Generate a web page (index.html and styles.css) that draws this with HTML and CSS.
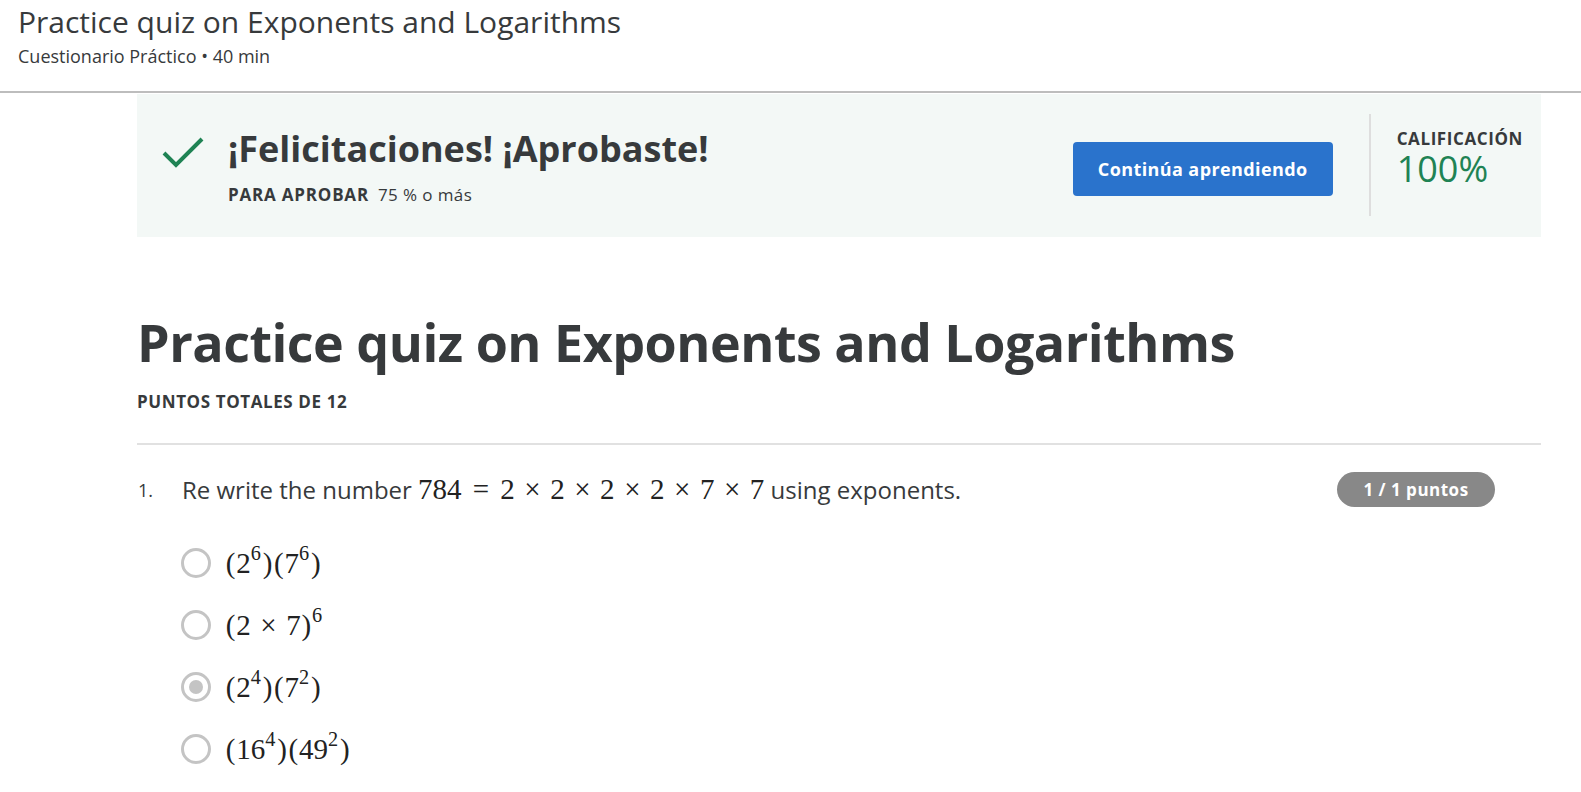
FILE: index.html
```html
<!DOCTYPE html>
<html lang="es">
<head>
<meta charset="utf-8">
<title>Practice quiz on Exponents and Logarithms</title>
<link rel="stylesheet" href="styles.css">
</head>
<body>
<header class="top">
  <h1 class="top-title">Practice quiz on Exponents and Logarithms</h1>
  <div class="top-sub">Cuestionario Práctico • 40 min</div>
</header>
<main class="content">
  <section class="banner">
    <div class="pass">
      <svg class="check" viewBox="0 0 42 32" width="42" height="32" aria-hidden="true">
        <polyline points="2,17 14,29 40,3" fill="none" stroke="#1f8354" stroke-width="4"/>
      </svg>
      <div class="pass-text">
        <div class="pass-title">¡Felicitaciones! ¡Aprobaste!</div>
        <div class="pass-req"><span class="pass-label">PARA APROBAR</span>75 % o más</div>
      </div>
    </div>
    <button class="btn" type="button">Continúa aprendiendo</button>
    <div class="divider"></div>
    <div class="grade">
      <div class="grade-label">CALIFICACIÓN</div>
      <div class="grade-value">100%</div>
    </div>
  </section>

  <h2 class="quiz-title">Practice quiz on Exponents and Logarithms</h2>
  <div class="points">PUNTOS TOTALES DE 12</div>
  <hr class="rule">

  <div class="question">
    <span class="qnum">1.</span>
    <p class="qtext">Re write the number <span class="math">784<span class="rel">=</span>2<span class="bin">×</span>2<span class="bin">×</span>2<span class="bin">×</span>2<span class="bin">×</span>7<span class="bin">×</span>7</span> using exponents.</p>
    <span class="badge">1 / 1 puntos</span>
  </div>

  <ul class="options">
    <li class="option"><span class="radio"></span><span class="math"><span class="par">(</span>2<sup>6</sup><span class="par">)</span><span class="par">(</span>7<sup>6</sup><span class="par">)</span></span></li>
    <li class="option"><span class="radio"></span><span class="math"><span class="par">(</span>2<span class="bin">×</span>7<span class="par">)</span><sup>6</sup></span></li>
    <li class="option"><span class="radio radio-on"></span><span class="math"><span class="par">(</span>2<sup>4</sup><span class="par">)</span><span class="par">(</span>7<sup>2</sup><span class="par">)</span></span></li>
    <li class="option"><span class="radio"></span><span class="math"><span class="par">(</span>16<sup>4</sup><span class="par">)</span><span class="par">(</span>49<sup>2</sup><span class="par">)</span></span></li>
  </ul>
</main>
</body>
</html>
```

FILE: styles.css
```css
html, body {
  margin: 0;
  padding: 0;
  background: #ffffff;
}

body {
  font-family: "Open Sans", "Liberation Sans", sans-serif;
  color: #373a3c;
}

.top {
  height: 93px;
  box-sizing: border-box;
  padding: 1px 18px 0;
  border-bottom: 2px solid #bdbdbd;
}

.top-title {
  margin: 0;
  font-size: 30px;
  font-weight: 400;
  line-height: normal;
}

.top-sub {
  margin-top: 2px;
  font-size: 18px;
  line-height: normal;
}

.content {
  padding: 1px 40px 40px 137px;
}

.banner {
  display: flex;
  height: 143px;
  box-sizing: border-box;
  padding: 0 18px 0 25px;
  background: #f3f8f6;
}

.pass {
  flex: 1;
  display: flex;
  padding-top: 30px;
}

.check {
  margin-top: 12px;
  margin-right: 24px;
  flex: none;
}

.pass-title {
  font-size: 36px;
  font-weight: 700;
  line-height: normal;
}

.pass-req {
  margin-top: 10px;
  font-size: 17px;
  letter-spacing: 0.4px;
  line-height: normal;
}

.pass-label {
  font-weight: 700;
  letter-spacing: 0.8px;
  margin-right: 9px;
}

.btn {
  align-self: flex-start;
  margin-top: 48px;
  width: 260px;
  height: 54px;
  border: 0;
  border-radius: 4px;
  background: #2a73cc;
  color: #ffffff;
  font-family: "Open Sans", "Liberation Sans", sans-serif;
  font-size: 18px;
  font-weight: 700;
  letter-spacing: 0.4px;
  padding: 0;
}

.divider {
  align-self: flex-start;
  margin: 20px 26px 0 36px;
  width: 2px;
  height: 102px;
  background: #dedede;
}

.grade {
  padding-top: 35px;
}

.grade-label {
  font-size: 17px;
  font-weight: 700;
  letter-spacing: 0.6px;
  line-height: 20px;
}

.grade-value {
  margin-top: 2px;
  font-size: 36px;
  line-height: 36px;
  color: #1f8354;
}

.quiz-title {
  margin: 69px 0 0;
  font-size: 52px;
  font-weight: 700;
  letter-spacing: -0.5px;
  line-height: normal;
}

.points {
  margin-top: 13px;
  font-size: 17px;
  font-weight: 700;
  letter-spacing: 0.6px;
  line-height: normal;
}

.rule {
  margin: 30px 0 0;
  border: 0;
  height: 2px;
  background: #e1e1e1;
}

.question {
  margin-top: 27px;
  display: flex;
  align-items: center;
  height: 35px;
}

.qnum {
  width: 45px;
  flex: none;
  font-size: 18px;
  line-height: normal;
  padding-left: 1px;
  box-sizing: border-box;
}

.qtext {
  flex: 1;
  margin: 0;
  font-size: 24px;
  line-height: normal;
}

.math {
  font-family: "Liberation Serif", "DejaVu Serif", serif;
  font-size: 29px;
  color: #222222;
  white-space: nowrap;
}

.rel,
.bin {
  display: inline-block;
  width: 0.778em;
  text-align: center;
}

.rel {
  margin: 0 0.2778em;
}

.bin {
  margin: 0 0.2222em;
}

.par {
  display: inline-block;
  width: 0.389em;
  text-align: center;
}

.math sup {
  font-size: 0.7em;
  vertical-align: 0;
  position: relative;
  top: -0.6em;
  line-height: 0;
  margin-right: 0.05em;
}

.badge {
  flex: none;
  margin-right: 46px;
  width: 158px;
  height: 35px;
  border-radius: 18px;
  background: #888888;
  color: #ffffff;
  font-size: 17px;
  font-weight: 700;
  letter-spacing: 0.5px;
  display: flex;
  align-items: center;
  justify-content: center;
}

.options {
  list-style: none;
  margin: 25px 0 0;
  padding: 0 0 0 44px;
}

.option {
  display: flex;
  align-items: center;
  gap: 14px;
  height: 62px;
}

.radio {
  width: 30px;
  height: 30px;
  box-sizing: border-box;
  border: 3px solid #c4c4c4;
  border-radius: 50%;
  display: flex;
  align-items: center;
  justify-content: center;
  flex: none;
}

.radio-on::after {
  content: "";
  width: 14px;
  height: 14px;
  border-radius: 50%;
  background: #c4c4c4;
}
```
